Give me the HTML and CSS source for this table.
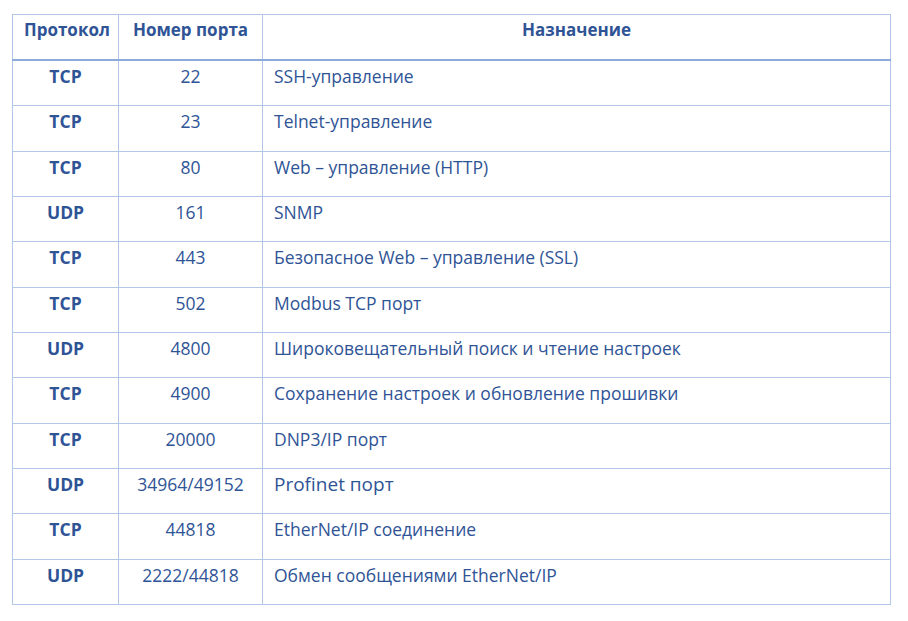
FILE: index.html
```html
<!DOCTYPE html>
<html lang="ru">
<head>
<meta charset="utf-8">
<link rel="stylesheet" href="styles.css">
</head>
<body>
<table class="ports">
  <colgroup>
    <col class="c-proto">
    <col class="c-port">
    <col class="c-desc">
  </colgroup>
  <thead>
    <tr><th>Протокол</th><th>Номер порта</th><th>Назначение</th></tr>
  </thead>
  <tbody>
    <tr><td class="proto">TCP</td><td class="port">22</td><td class="desc">SSH-управление</td></tr>
    <tr><td class="proto">TCP</td><td class="port">23</td><td class="desc">Telnet-управление</td></tr>
    <tr><td class="proto">TCP</td><td class="port">80</td><td class="desc">Web – управление (HTTP)</td></tr>
    <tr><td class="proto">UDP</td><td class="port">161</td><td class="desc">SNMP</td></tr>
    <tr><td class="proto">TCP</td><td class="port">443</td><td class="desc">Безопасное Web – управление (SSL)</td></tr>
    <tr><td class="proto">TCP</td><td class="port">502</td><td class="desc">Modbus TCP порт</td></tr>
    <tr><td class="proto">UDP</td><td class="port">4800</td><td class="desc">Широковещательный поиск и чтение настроек</td></tr>
    <tr><td class="proto">TCP</td><td class="port">4900</td><td class="desc">Сохранение настроек и обновление прошивки</td></tr>
    <tr><td class="proto">TCP</td><td class="port">20000</td><td class="desc">DNP3/IP порт</td></tr>
    <tr><td class="proto">UDP</td><td class="port">34964/49152</td><td class="desc big">Profinet порт</td></tr>
    <tr><td class="proto">TCP</td><td class="port">44818</td><td class="desc">EtherNet/IP соединение</td></tr>
    <tr><td class="proto">UDP</td><td class="port">2222/44818</td><td class="desc">Обмен сообщениями EtherNet/IP</td></tr>
  </tbody>
</table>
</body>
</html>
```
FILE: styles.css
```css
html, body {
  margin: 0;
  padding: 0;
  background: #ffffff;
}
body {
  font-family: "Open Sans", "Noto Sans", sans-serif;
  color: #2f5496;
}
.ports {
  margin: 14px 0 0 12px;
  width: 878px;
  border-collapse: collapse;
  table-layout: fixed;
}
.c-proto { width: 106px; }
.c-port { width: 144px; }
.c-desc { width: 628px; }
.ports th,
.ports td {
  border: 1px solid #b4c6e7;
  vertical-align: top;
  font-size: 17.5px;
  line-height: 22px;
  padding: 4px 11px 0 11px;
  height: 40.34px;
}
.ports th {
  font-weight: 700;
  font-size: 17px;
  text-align: center;
  padding-top: 4px;
  border-bottom: 2px solid #8eaadb;
  height: 40px;
}
.ports td.proto {
  font-weight: 700;
  text-align: center;
}
.ports td.port {
  text-align: center;
}
.ports td.desc {
  text-align: left;
}
.ports td.big {
  font-size: 19px;
}
```
